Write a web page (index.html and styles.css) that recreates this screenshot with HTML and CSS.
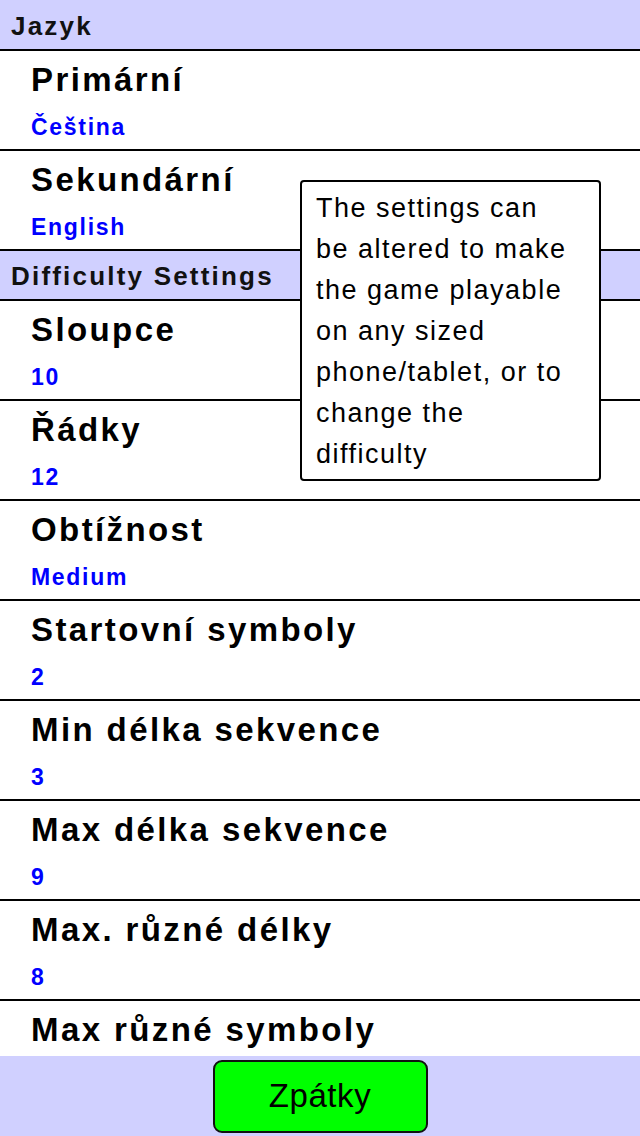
FILE: index.html
```html
<!DOCTYPE html>
<html lang="cs">

<head>
  <meta charset="UTF-8">
  <title>Nastavení</title>
  <link rel="stylesheet" href="styles.css">
</head>

<body>
  <div class="settings">
    <div class="section-title first">Jazyk</div>
    <div class="row">
      <div class="label">Primární</div>
      <div class="value">Čeština</div>
    </div>
    <div class="row">
      <div class="label">Sekundární</div>
      <div class="value">English</div>
    </div>
    <div class="section-title">Difficulty Settings</div>
    <div class="row">
      <div class="label">Sloupce</div>
      <div class="value">10</div>
    </div>
    <div class="row">
      <div class="label">Řádky</div>
      <div class="value">12</div>
    </div>
    <div class="row">
      <div class="label">Obtížnost</div>
      <div class="value">Medium</div>
    </div>
    <div class="row">
      <div class="label">Startovní symboly</div>
      <div class="value">2</div>
    </div>
    <div class="row">
      <div class="label">Min délka sekvence</div>
      <div class="value">3</div>
    </div>
    <div class="row">
      <div class="label">Max délka sekvence</div>
      <div class="value">9</div>
    </div>
    <div class="row">
      <div class="label">Max. různé délky</div>
      <div class="value">8</div>
    </div>
    <div class="row">
      <div class="label">Max různé symboly</div>
      <div class="value">5</div>
    </div>
  </div>

  <!-- hint bubble over the list -->
  <div class="hint">The settings can<br>be altered to make<br>the game playable<br>on any sized<br>phone/tablet, or to<br>change the<br>difficulty</div>

  <div class="footer">
    <button class="back">Zpátky</button>
  </div>
</body>

</html>
```

FILE: styles.css
```css
html,
body {
  height: 100%;
}

body {
  margin: 0;
  background: #fff;
  color: #000;
  font-family: 'Liberation Sans', Arial, sans-serif;
  display: flex;
  flex-direction: column;
  position: relative;
}

.settings {
  flex: 1;
  overflow: hidden;
}

.section-title {
  box-sizing: border-box;
  height: 50px;
  padding: 3px 11px 0;
  background: #d0d0ff;
  border-bottom: 2px solid #000;
  font-size: 26px;
  font-weight: bold;
  letter-spacing: 2.2px;
  line-height: 45px;
  color: #111;
}

.section-title.first {
  height: 51px;
  padding-top: 4px;
}

.row {
  box-sizing: border-box;
  height: 100px;
  padding: 9px 31px 0;
  border-bottom: 2px solid #000;
}

.label {
  font-size: 33px;
  font-weight: bold;
  letter-spacing: 2.4px;
  line-height: 40px;
  white-space: nowrap;
}

.value {
  margin-top: 12px;
  font-size: 23px;
  font-weight: bold;
  letter-spacing: 1.7px;
  line-height: 30px;
  color: #0000ff;
}

.hint {
  position: absolute;
  left: 300px;
  top: 180px;
  box-sizing: border-box;
  width: 301px;
  height: 301px;
  padding: 6px 14px 0;
  background: #fff;
  border: 2px solid #000;
  border-radius: 4px;
  font-size: 27px;
  letter-spacing: 1.5px;
  line-height: 41px;
  white-space: nowrap;
}

.footer {
  height: 80px;
  flex-shrink: 0;
  background: #d0d0ff;
  display: flex;
  justify-content: center;
  align-items: center;
}

.back {
  width: 215px;
  height: 73px;
  background: #00ff00;
  border: 2px solid #111;
  border-radius: 9px;
  font-family: 'Liberation Sans', Arial, sans-serif;
  font-size: 33px;
  letter-spacing: 0.6px;
  color: #000;
  cursor: pointer;
}
```
